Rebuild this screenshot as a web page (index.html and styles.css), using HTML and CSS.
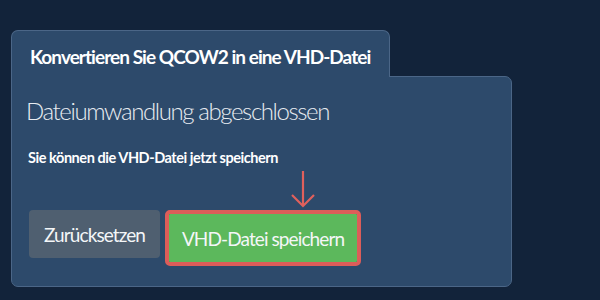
FILE: index.html
```html
<!DOCTYPE html>
<html lang="de">
<head>
    <meta charset="UTF-8">
    <meta name="viewport" content="width=device-width, initial-scale=1.0">
    <title>QCOW2 in VHD</title>
    <link rel="stylesheet" href="styles.css">
</head>
<body>
    <div class="converter">
        <div class="tab">Konvertieren Sie QCOW2 in eine VHD-Datei</div>
        <div class="panel">
            <h2 class="status">Dateiumwandlung abgeschlossen</h2>
            <p class="hint">Sie können die VHD-Datei jetzt speichern</p>
            <div class="pointer">
                <svg width="26" height="40" viewBox="0 0 26 40">
                    <path d="M13 1 V36 M2 25 L13 36 L24 25" fill="none" stroke="#e0605c" stroke-width="2.2"/>
                </svg>
            </div>
            <div class="actions">
                <button type="button" class="btn reset">Zurücksetzen</button>
                <div class="highlight">
                    <button type="button" class="btn save">VHD-Datei speichern</button>
                </div>
            </div>
        </div>
    </div>
</body>
</html>
```

FILE: styles.css
```css
*{
    margin: 0;
    padding: 0;
    box-sizing: border-box;
}
body{
    background-color: #12233a;
    font-family: Lato, "Open Sans", sans-serif;
    color: #fff;
}
.converter{
    padding: 30px 0 0 11px;
}
.tab{
    position: relative;
    z-index: 1;
    width: 379px;
    height: 47px;
    margin-bottom: -1px;
    padding: 14px 0 0 18px;
    background-color: #2d4a6b;
    border: 1px solid #4b6687;
    border-bottom: none;
    border-radius: 7px 7px 0 0;
    font-size: 19px;
    font-weight: bold;
    letter-spacing: -0.95px;
    white-space: nowrap;
}
.panel{
    width: 501px;
    background-color: #2d4a6b;
    border: 1px solid #4b6687;
    border-radius: 0 7px 7px 7px;
    padding: 18px 19px 20px 17px;
}
.status{
    margin-left: -3px;
    font-size: 24px;
    font-weight: 300;
    color: #e8ecf1;
    line-height: 31px;
    letter-spacing: -1.4px;
}
.hint{
    margin: 23px 0 0 -1px;
    font-size: 14.5px;
    font-weight: bold;
    line-height: 18px;
    letter-spacing: -0.45px;
}
.pointer{
    height: 43px;
    padding: 3px 0 0 261px;
}
.pointer svg{
    display: block;
}
.actions{
    display: flex;
    align-items: flex-start;
    gap: 5px;
}
.btn{
    font-family: inherit;
    font-size: 19px;
    letter-spacing: -0.9px;
    white-space: nowrap;
    color: #f4f6f8;
    border: none;
    border-radius: 4px;
    height: 48px;
    cursor: pointer;
}
.reset{
    width: 131px;
    background-color: #4f5f70;
}
.highlight{
    border: 4px solid #dc5d59;
    border-radius: 5px;
}
.save{
    width: 188px;
    background-color: #5cb85c;
    border-radius: 1px;
}
```
